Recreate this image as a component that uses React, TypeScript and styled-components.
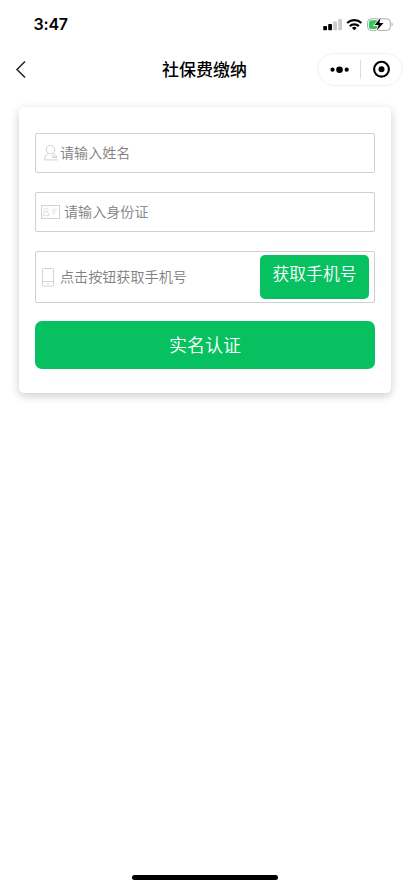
import React from "react";
import styled, { createGlobalStyle } from "styled-components";

const GlobalStyle = createGlobalStyle`
  * { box-sizing: border-box; }
  body { margin: 0; background: #fff; }
`;

const Screen = styled.main`
  width: 100%;
  height: 100vh;
  min-height: 888px;
  display: flex;
  flex-direction: column;
  background: #fff;
  overflow: hidden;
  font-family: "Noto Sans CJK SC", sans-serif;
`;

const StatusBar = styled.header`
  height: 50px;
  flex: none;
  display: flex;
  justify-content: space-between;
  padding: 0 16px 0 33.5px;
`;

const Clock = styled.time`
  margin-top: 14px;
  font: 600 16px/20px Inter, sans-serif;
  letter-spacing: -0.2px;
  color: #000;
`;

const StatusIcons = styled.svg`
  width: 72px;
  height: 16px;
  margin-top: 16px;
`;

const NavBar = styled.nav`
  height: 38px;
  flex: none;
  display: grid;
  grid-template-columns: 94px 1fr 94px;
  align-items: center;
  padding: 0 7px 0 0;
`;

const BackButton = styled.button`
  display: flex;
  border: 0;
  padding: 0 0 0 15px;
  background: none;
`;

const Title = styled.h1`
  margin: -1px 0 0 6px;
  text-align: center;
  font-size: 17px;
  line-height: 24px;
  font-weight: 500;
  color: #000;
`;

const Capsule = styled.div`
  width: 86px;
  height: 33px;
  border: 1px solid #f1f1f1;
  border-radius: 17px;
  display: flex;
  justify-self: end;
`;

const Card = styled.form`
  flex: none;
  margin: 19px 19px 0;
  height: 286px;
  padding: 26px 16px 0;
  display: flex;
  flex-direction: column;
  background: #fff;
  border-radius: 5px;
  box-shadow: 0 3px 10px rgba(0, 0, 0, 0.2);
`;

const Field = styled.label<{ $height: number; $inset: number; $gap: number }>`
  height: ${(p) => p.$height}px;
  flex: none;
  margin-bottom: 19px;
  padding: 0 5px 0 ${(p) => p.$inset}px;
  display: flex;
  align-items: center;
  gap: ${(p) => p.$gap}px;
  border: 1px solid #cfcfcf;
  border-radius: 2px;
`;

const Placeholder = styled.span`
  flex: 1;
  padding-bottom: 2px;
  font-size: 14.1px;
  line-height: 20px;
  font-weight: 350;
  color: #808080;
  white-space: nowrap;
`;

const Icon = styled.svg`
  flex: none;
  fill: none;
  stroke: #d3d3d3;
  stroke-width: 1;
`;

const PhoneButton = styled.button`
  width: 109px;
  height: 44px;
  padding: 0 0 9px;
  border: 0;
  border-radius: 5px;
  background: #07c160;
  color: #fff;
  font: 350 16.8px/24px "Noto Sans CJK SC", sans-serif;
`;

const SubmitButton = styled.button`
  height: 48px;
  flex: none;
  margin-top: -1px;
  padding: 0 0 2px;
  border: 0;
  border-radius: 7px;
  background: #07c160;
  color: #fff;
  font: 350 18px/26px "Noto Sans CJK SC", sans-serif;
`;

const HomeIndicator = styled.div`
  width: 146px;
  height: 5px;
  flex: none;
  margin: auto auto 8px;
  border-radius: 3px;
  background: #000;
`;

const PersonIcon = () => (
  <Icon width="15" height="17" viewBox="0 0 15 17">
    <circle cx="6.5" cy="4.6" r="4.2" />
    <path d="M4.2 8.2C1.8 9.4.6 11.6 .6 14.9H14M8.8 8.2l2.4 1.6" />
    <rect x="8.6" y="11" width="4" height="1.6" />
  </Icon>
);

const IdCardIcon = () => (
  <Icon width="19" height="14" viewBox="0 0 19 14">
    <rect x=".5" y=".5" width="18" height="13" />
    <g strokeWidth=".8" stroke="#dadada">
      <circle cx="5.2" cy="5" r="1.9" />
      <path d="M2.2 10.6c0-2.2 1.1-3.7 3-3.7s3 1.5 3 3.7zM11 4.6h5.3M11 6.7h4M11 8.8h2.5" />
    </g>
  </Icon>
);

const HandsetIcon = () => (
  <Icon width="12" height="19" viewBox="0 0 12 19">
    <rect x=".5" y=".5" width="11" height="17.5" rx="1" />
    <path d="M.5 13.5h11M5 15.8h2" />
  </Icon>
);

export default function App() {
  return (
    <Screen>
      <GlobalStyle />
      <StatusBar>
        <Clock>3:47</Clock>
        <StatusIcons viewBox="0 0 72 16">
          <rect x="1.2" y="10" width="3.8" height="4.2" rx=".8" />
          <rect x="6.2" y="8" width="3.8" height="6.2" rx=".8" />
          <rect x="11.2" y="5.5" width="3.8" height="8.7" rx=".8" fill="#ccc" />
          <rect x="16.2" y="3" width="3.8" height="11.2" rx=".8" fill="#ccc" />
          <g fill="none" stroke="#000" strokeWidth="2.3">
            <path d="M25.2 7a10.4 10.4 0 0 1 14.2 0" />
            <path d="M27.8 10.1a6.5 6.5 0 0 1 9 0" />
          </g>
          <path d="M29.9 11.9a3.6 3.6 0 0 1 4.8 0l-2.4 2.4z" />
          <rect x="45.5" y="2.8" width="22.8" height="11.6" rx="3.6" fill="none" stroke="#aaa" />
          <path d="M69.6 6.6c1.5.6 1.5 3.2 0 3.8z" fill="#aaa" />
          <rect x="47" y="4.3" width="9.6" height="8.6" rx="2" fill="#35c759" />
          <path
            d="M58.6 1.8l-6 7.3h4l-1.8 5.5 6.8-7.5h-4.2z"
            stroke="#fff"
            strokeWidth="1.6"
            paintOrder="stroke"
          />
        </StatusIcons>
      </StatusBar>

      <NavBar>
        <BackButton type="button" aria-label="返回">
          <svg width="12" height="18" viewBox="0 0 12 18" fill="none" stroke="#222" strokeWidth="1.5">
            <path d="M10 1.5L2 9.5l8 8" />
          </svg>
        </BackButton>
        <Title>社保费缴纳</Title>
        <Capsule>
          <svg width="84" height="31" viewBox="0 0 84 31">
            <circle cx="14.5" cy="15.7" r="2.1" />
            <circle cx="21.5" cy="15.7" r="3.3" />
            <circle cx="28.7" cy="15.7" r="2.1" />
            <path d="M42.5 6v18.5" stroke="#ddd" />
            <circle cx="63.5" cy="15.2" r="7.4" fill="none" stroke="#000" strokeWidth="2.1" />
            <circle cx="63.5" cy="15.2" r="3" />
          </svg>
        </Capsule>
      </NavBar>

      <Card>
        <Field $height={40} $inset={8} $gap={1}>
          <PersonIcon />
          <Placeholder>请输入姓名</Placeholder>
        </Field>
        <Field $height={40} $inset={5} $gap={4}>
          <IdCardIcon />
          <Placeholder>请输入身份证</Placeholder>
        </Field>
        <Field $height={52} $inset={6} $gap={6}>
          <HandsetIcon />
          <Placeholder>点击按钮获取手机号</Placeholder>
          <PhoneButton type="button">获取手机号</PhoneButton>
        </Field>
        <SubmitButton type="button">实名认证</SubmitButton>
      </Card>

      <HomeIndicator />
    </Screen>
  );
}
